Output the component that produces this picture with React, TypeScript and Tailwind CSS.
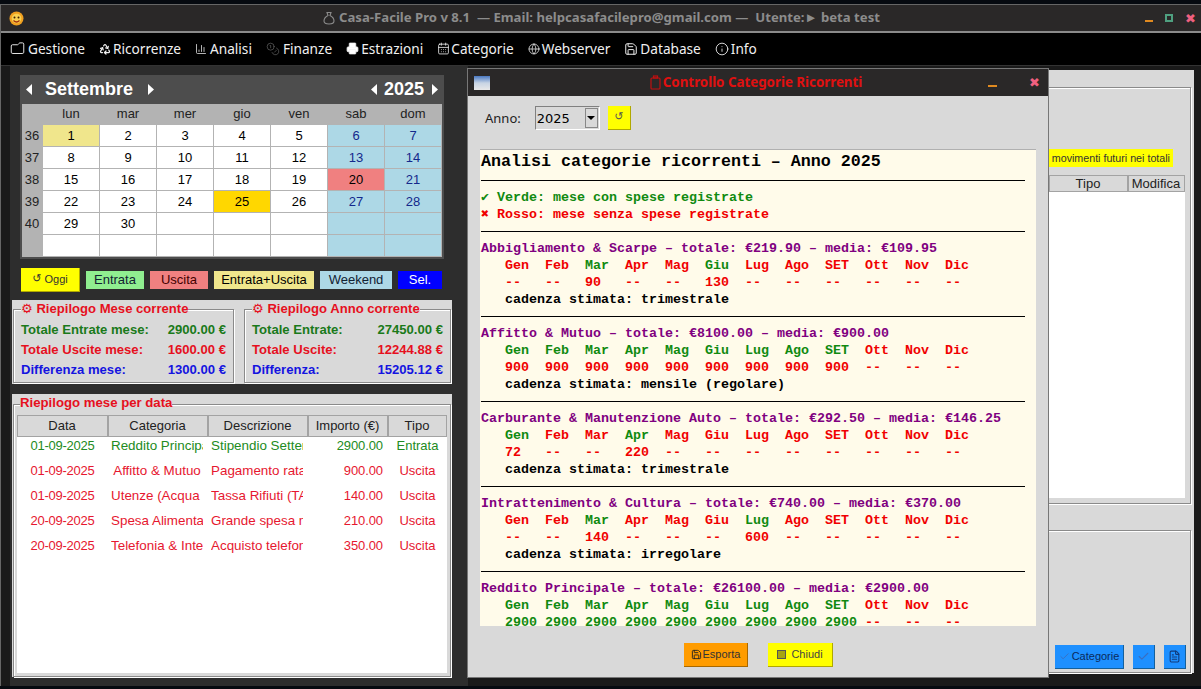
import { BarChart3, CalendarDays, Check, Coins, FileText, Folder, Globe, Info, Printer, Recycle, Save } from "lucide-react";

const menuItems = [
  { label: "Gestione", icon: <Folder size={15} strokeWidth={1.5} className="-scale-x-100" />, gap: "gap-[3px]" },
  { label: "Ricorrenze", icon: <Recycle size={12} strokeWidth={2.5} />, gap: "gap-[2px]" },
  { label: "Analisi", icon: <BarChart3 size={12} strokeWidth={1.5} />, gap: "gap-[3px]" },
  { label: "Finanze", icon: <Coins size={14} strokeWidth={1} className="text-[#777]" />, gap: "gap-[3px]" },
  { label: "Estrazioni", icon: <Printer size={13} fill="#fff" strokeWidth={1.5} />, gap: "gap-[2px]" },
  { label: "Categorie", icon: <CalendarDays size={13} strokeWidth={1.5} />, gap: "gap-[1px]" },
  { label: "Webserver", icon: <Globe size={12} strokeWidth={1.5} />, gap: "gap-[2px]" },
  { label: "Database", icon: <Save size={14} strokeWidth={1.7} />, gap: "gap-[2px]" },
  { label: "Info", icon: <Info size={14} strokeWidth={1.5} />, gap: "gap-[2px]" },
];

const weekDays = ["lun", "mar", "mer", "gio", "ven", "sab", "dom"];
const weeks = [36, 37, 38, 39, 40, 0];
const dayBg: Record<number, string> = { 1: "bg-[#f0e68c]", 20: "bg-[#f08080]", 25: "bg-[#ffd700]" };

const months = ["Gen", "Feb", "Mar", "Apr", "Mag", "Giu", "Lug", "Ago", "SET", "Ott", "Nov", "Dic"];

const movements = [
  ["01-09-2025", "Reddito Principale", "Stipendio Settembre", "2900.00", "Entrata"],
  ["01-09-2025", "Affitto & Mutuo", "Pagamento rata mutuo", "900.00", "Uscita"],
  ["01-09-2025", "Utenze (Acqua & Luce)", "Tassa Rifiuti (TARI)", "140.00", "Uscita"],
  ["20-09-2025", "Spesa Alimentare", "Grande spesa mensile", "210.00", "Uscita"],
  ["20-09-2025", "Telefonia & Internet", "Acquisto telefono", "350.00", "Uscita"],
];

const categories = [
  {
    title: "Abbigliamento & Scarpe – totale: €219.90 – media: €109.95",
    green: [2, 5],
    values: { 2: "90", 5: "130" } as Record<number, string>,
    cadence: "trimestrale",
  },
  {
    title: "Affitto & Mutuo – totale: €8100.00 – media: €900.00",
    green: [0, 1, 2, 3, 4, 5, 6, 7, 8],
    values: { 0: "900", 1: "900", 2: "900", 3: "900", 4: "900", 5: "900", 6: "900", 7: "900", 8: "900" } as Record<number, string>,
    cadence: "mensile (regolare)",
  },
  {
    title: "Carburante & Manutenzione Auto – totale: €292.50 – media: €146.25",
    green: [0, 3],
    values: { 0: "72", 3: "220" } as Record<number, string>,
    cadence: "trimestrale",
  },
  {
    title: "Intrattenimento & Cultura – totale: €740.00 – media: €370.00",
    green: [2, 6],
    values: { 2: "140", 6: "600" } as Record<number, string>,
    cadence: "irregolare",
  },
  {
    title: "Reddito Principale – totale: €26100.00 – media: €2900.00",
    green: [0, 1, 2, 3, 4, 5, 6, 7, 8],
    values: { 0: "2900", 1: "2900", 2: "2900", 3: "2900", 4: "2900", 5: "2900", 6: "2900", 7: "2900", 8: "2900" } as Record<number, string>,
    valuesGreen: true,
    cadence: "mensile (regolare)",
  },
];

const groupBox = "relative border border-[#8a8a8a] shadow-[inset_1px_1px_0_#fff,1px_1px_0_#fff]";

function Arrow({ left }: { left?: boolean }) {
  return (
    <svg width="7" height="11" viewBox="0 0 7 11" aria-hidden>
      <polygon points={left ? "6,0 6,11 0,5.5" : "1,0 1,11 7,5.5"} fill="#fff" />
    </svg>
  );
}

function Calendar() {
  return (
    <div className="ml-[8px] w-[424px] h-[184px] bg-[#4d4d4d] flex flex-col">
      <div className="h-[29px] flex items-center text-white font-bold text-[18px] shrink-0">
        <div className="ml-[6px]"><Arrow left /></div>
        <span className="ml-[12px]">Settembre</span>
        <div className="ml-[14px]"><Arrow /></div>
        <div className="ml-auto"><Arrow left /></div>
        <span className="ml-[6px]">2025</span>
        <div className="ml-[7px] mr-[6px]"><Arrow /></div>
      </div>
      <div className="mx-[2px] h-[153px] bg-[#b3b3b3] grid grid-cols-[20px_repeat(7,56px)] grid-rows-[20px_repeat(6,21px)] gap-x-px gap-y-px text-[13px] text-black">
        <div />
        {weekDays.map((d) => (
          <div key={d} className="flex items-center justify-center text-[#222]">{d}</div>
        ))}
        {weeks.map((w, r) => (
          <Row key={r} week={w} row={r} />
        ))}
      </div>
    </div>
  );
}

function Row({ week, row }: { week: number; row: number }) {
  return (
    <>
      <div className="flex items-center justify-center text-[#222]">{week || ""}</div>
      {weekDays.map((_, c) => {
        const day = row * 7 + c + 1;
        const shown = day <= 30;
        const weekend = c >= 5;
        const bg = (shown && dayBg[day]) || (weekend ? "bg-[#add8e6]" : "bg-white");
        return (
          <div
            key={c}
            className={`flex items-center justify-center ${bg} ${weekend && day !== 20 ? "text-[#14288c]" : "text-black"}`}
          >
            {shown ? day : ""}
          </div>
        );
      })}
    </>
  );
}

function Legend() {
  const items = [
    ["Entrata", "w-[58px] bg-[#90ee90] text-[#123]"],
    ["Uscita", "w-[58px] bg-[#f08080] text-[#400]"],
    ["Entrata+Uscita", "w-[100px] bg-[#f0e68c] text-black"],
    ["Weekend", "w-[72px] bg-[#add8e6] text-[#123]"],
    ["Sel.", "w-[44px] bg-[#0000ff] text-white"],
  ];
  return (
    <div className="ml-[9px] mt-[9px] flex items-center gap-[6px] h-[24px]">
      <div className="w-[59px] h-[24px] bg-[#ffff00] border-b border-r border-[#b0a800] flex items-center justify-center gap-[3px] text-[11px] text-[#333]">
        <span className="font-['DejaVu_Sans',sans-serif]">↺</span>
        <span>Oggi</span>
      </div>
      {items.map(([label, cls]) => (
        <div key={label} className={`h-[18px] flex items-center justify-center text-[13px] ${cls}`}>{label}</div>
      ))}
    </div>
  );
}

function Summary({ title, width, rows }: { title: string; width: string; rows: [string, string, string][] }) {
  return (
    <div className={`${groupBox} ${width} h-[74px] pt-[10px] px-[7px] text-[13.1px] font-bold`}>
      <div className="absolute -top-[9px] left-[7px] bg-[#d9d9d9] text-[#e6101e] leading-[16px] whitespace-pre">
        <span className="font-['DejaVu_Sans',sans-serif] font-normal">⚙</span> {title}
      </div>
      {rows.map(([label, value, color]) => (
        <div key={label} className={`h-[20px] flex items-center justify-between ${color}`}>
          <span>{label}</span>
          <span>{value}</span>
        </div>
      ))}
    </div>
  );
}

function HeadCell({ children, className }: { children: React.ReactNode; className?: string }) {
  return (
    <div className={`flex items-center justify-center border border-[#a3a3a3] bg-[#d9d9d9] pr-px ${className ?? ""}`}>
      {children}
    </div>
  );
}

function Movements() {
  const heads = ["Data", "Categoria", "Descrizione", "Importo (€)", "Tipo"];
  return (
    <div className="mt-[10px] w-[440px] h-[283px] bg-[#d9d9d9] pt-[10px] px-px text-[13px]">
      <div className={`${groupBox} h-[273px] p-[3px] pt-[10px]`}>
        <div className="absolute -top-[10px] left-[6px] bg-[#d9d9d9] font-bold text-[13.2px] text-[#e6101e] leading-[16px]">Riepilogo mese per data</div>
        <div className="bg-white h-[258px]">
          <div className="grid grid-cols-[91px_100px_100px_80px_59px] h-[18px] text-[#222]">
            {heads.map((h) => (
              <HeadCell key={h}>{h}</HeadCell>
            ))}
          </div>
          {movements.map((m, i) => (
            <div
              key={i}
              className={`grid grid-cols-[91px_100px_100px_80px_59px] h-[25px] items-center leading-[16px] ${i === 0 ? "text-[#228b22]" : "text-[#e6172f]"}`}
            >
              <div className="text-center tracking-[-0.25px]">{m[0]}</div>
              <div className="ml-[3px] mr-[5px] text-center text-[13.4px] whitespace-nowrap overflow-hidden">{m[1]}</div>
              <div className="ml-[3px] mr-[5px] text-[13.4px] whitespace-nowrap overflow-hidden">{m[2]}</div>
              <div className="pr-[5px] text-right tracking-[-0.1px]">{m[3]}</div>
              <div className="text-center">{m[4]}</div>
            </div>
          ))}
        </div>
      </div>
    </div>
  );
}

function RightPanel() {
  return (
    <div className="mt-[4px] w-[726px] h-[603px] bg-[#d9d9d9] pt-[17px] pr-[3px] flex flex-col text-[13px]">
      <div className={`${groupBox} h-[417px] pt-[61px] pr-[5px] flex flex-col items-end`}>
        <div className="mr-[12px] h-[18px] bg-[#ffff00] px-[3px] flex items-center text-[10.7px] text-[#333]">movimenti futuri nei totali</div>
        <div className="mt-[8px] w-[136px] h-[323px] flex flex-col">
          <div className="h-[17px] flex text-[#222]">
            <HeadCell className="w-[79px]">Tipo</HeadCell>
            <HeadCell className="flex-1">Modifica</HeadCell>
          </div>
          <div className="flex-1 bg-white" />
        </div>
      </div>
      <div className={`${groupBox} mt-[26px] h-[143px] pr-[4px] pb-[3px] flex items-end justify-end gap-[9px]`}>
        <BlueButton className="w-[69px] gap-[2px]">
          <Check size={11} className="text-[#3a6ec0]" />
          <span>Categorie</span>
        </BlueButton>
        <BlueButton className="w-[22px]">
          <Check size={13} className="text-[#3a6ec0]" />
        </BlueButton>
        <BlueButton className="w-[22px]">
          <FileText size={13} className="text-[#123a7a]" />
        </BlueButton>
      </div>
    </div>
  );
}

function BlueButton({ className, children }: { className: string; children: React.ReactNode }) {
  return (
    <div className={`h-[24px] bg-[#1e90ff] border-r border-b border-[#14609c] flex items-center justify-center text-[11px] text-[#0a2a5c] ${className}`}>
      {children}
    </div>
  );
}

function MonoReport() {
  const hr = (
    <div className="h-[17px] flex items-center pr-[11px]">
      <div className="h-px w-full bg-black" />
    </div>
  );
  return (
    <div className="mx-[12px] h-[477px] bg-[#fffbea] border-t border-[#b0b0b0] overflow-hidden pl-px pt-px font-['Liberation_Mono','DejaVu_Sans_Mono',monospace] font-bold text-[13.33px] leading-[17px] whitespace-pre">
      <div className="h-[21px] text-[16.67px] leading-[21px] text-black">Analisi categorie ricorrenti – Anno 2025</div>
      {hr}
      <div className="text-[#108a10]">✔ Verde: mese con spese registrate</div>
      <div className="text-[#f00000]">✖ Rosso: mese senza spese registrate</div>
      {hr}
      {categories.map((cat) => (
        <div key={cat.title}>
          <div className="text-[#800080]">{cat.title}</div>
          <div className="flex pl-[24px]">
            {months.map((m, i) => (
              <span key={m} className={`w-[40px] ${cat.green.includes(i) ? "text-[#108a10]" : "text-[#f00000]"}`}>{m}</span>
            ))}
          </div>
          <div className="flex pl-[24px]">
            {months.map((m, i) => (
              <span key={m} className={`w-[40px] ${cat.valuesGreen && cat.values[i] ? "text-[#108a10]" : "text-[#f00000]"}`}>{cat.values[i] ?? "--"}</span>
            ))}
          </div>
          <div className="pl-[24px] text-black">cadenza stimata: {cat.cadence}</div>
          {hr}
        </div>
      ))}
    </div>
  );
}

function Modal() {
  return (
    <div className="absolute left-[467px] top-[68px] w-[582px] h-[610px] bg-[#d9d9d9] border border-[#777] flex flex-col">
      <div className="h-[27px] shrink-0 bg-[#2a2828] flex items-center relative font-['Noto_Sans',sans-serif] font-bold text-[13.33px] text-[#e01010]">
        <div className="ml-[6px] w-[16px] h-[14px] bg-gradient-to-b from-[#4a78c0] via-[#c8d4e4] to-[#e8e8e8]" />
        <div className="flex-1 flex items-center justify-center gap-[2px] pl-[34px]">
          <svg width="11" height="15" viewBox="0 0 11 15" fill="none" stroke="#c01010" strokeWidth="1.2" aria-hidden>
            <rect x="1" y="3" width="9" height="11" rx="1" />
            <rect x="3.5" y="1" width="4" height="2" />
          </svg>
          <span>Controllo Categorie Ricorrenti</span>
        </div>
        <div className="w-[9px] h-[2px] mt-[6px] bg-[#e08a20] mr-[32px]" />
        <span className="mr-[8px] text-[#f06080] text-[13px] leading-none font-['DejaVu_Sans',sans-serif]">✖</span>
      </div>
      <div className="h-[53px] shrink-0 flex items-start pt-[10px] pl-[17px]">
        <span className="mt-[3px] font-['Noto_Sans',sans-serif] text-[13px] text-[#222]">Anno:</span>
        <div className="ml-[14px] w-[65px] h-[24px] bg-[#d9d9d9] border border-[#808080] border-b-white border-r-white flex items-center justify-between">
          <span className="pl-px pt-px font-['DejaVu_Sans',sans-serif] text-[13px] text-black">2025</span>
          <div className="w-[13px] h-[20px] mr-px border border-[#888] flex items-center justify-center">
            <svg width="8" height="4" viewBox="0 0 8 4" aria-hidden><polygon points="0,0 8,0 4,4" fill="#000" /></svg>
          </div>
        </div>
        <div className="ml-[8px] w-[23px] h-[24px] bg-[#ffff00] border-r border-b border-[#b0a800] flex items-center justify-center text-[11px] text-[#555] font-['DejaVu_Sans',sans-serif]">↺</div>
      </div>
      <MonoReport />
      <div className="flex-1 flex items-start gap-[20px] pt-[17px] pl-[216px] text-[11px]">
        <div className="w-[64px] h-[24px] bg-[#ff9c00] border-r border-b border-[#a86800] flex items-center justify-center gap-[1px] text-[#333]">
          <Save size={11} className="text-[#222]" />
          <span>Esporta</span>
        </div>
        <div className="w-[65px] h-[24px] bg-[#ffff00] border-r border-b border-[#b0a800] flex items-center justify-center gap-[5px] text-[#444]">
          <div className="w-[9px] h-[9px] bg-[#a8a410] border border-[#555]" />
          <span>Chiudi</span>
        </div>
      </div>
    </div>
  );
}

export default function App() {
  return (
    <div className="relative w-[1201px] h-[689px] bg-[#060a10] overflow-hidden font-['Liberation_Sans',sans-serif]">
      <div className="absolute inset-x-0 top-[4px] bottom-[3px] border-t border-l border-[#666] bg-[#1a1a1a] flex flex-col">
        <div className="h-[26px] shrink-0 bg-[#2a2828] grid grid-cols-[1fr_auto_1fr] items-center">
          <svg className="ml-[8px]" width="15" height="15" viewBox="0 0 15 15" aria-hidden>
            <circle cx="7.5" cy="7.5" r="7" fill="#f0a020" />
            <circle cx="7.5" cy="7.5" r="4.8" fill="#f8d050" />
            <circle cx="5.5" cy="6.5" r="1" fill="#402000" />
            <circle cx="9.5" cy="6.5" r="1" fill="#402000" />
            <path d="M4.5 9.5 Q7.5 12.5 10.5 9.5" stroke="#a03010" strokeWidth="1.2" fill="none" />
          </svg>
          <div className="flex items-center gap-[3px] font-['Noto_Sans',sans-serif] font-bold text-[13.15px] text-[#8c8c8c] whitespace-pre">
            <svg width="14" height="14" viewBox="0 0 14 14" fill="none" stroke="#8c8c8c" strokeWidth="1.1" aria-hidden>
              <path d="M5 1.5 h4 l-1 3 q4 2 4 5.5 q0 3 -5 3 q-5 0 -5 -3 q0 -3.5 4 -5.5 z" />
            </svg>
            <span>Casa-Facile Pro v 8.1  — Email: helpcasafacilepro@gmail.com —  Utente:► beta test</span>
          </div>
          <div className="flex items-center justify-end pr-[5px] gap-[12px]">
            <div className="w-[8px] h-[2px] mt-[6px] bg-[#e08a20]" />
            <div className="w-[8px] h-[8px] border-2 border-[#4fa080]" />
            <span className="text-[#f06080] text-[13px] leading-none font-['DejaVu_Sans',sans-serif]">✖</span>
          </div>
        </div>
        <div className="h-[2px] shrink-0 bg-[#8a8a8a]" />
        <div className="h-[32px] shrink-0 bg-black flex items-center pl-[9px] gap-[14px] font-['Noto_Sans',sans-serif] text-[13.65px] text-[#f0f0f0]">
          {menuItems.map((m) => (
            <div key={m.label} className={`flex items-center ${m.gap}`}>
              {m.icon}
              <span>{m.label}</span>
            </div>
          ))}
        </div>
        <div className="flex-1 flex min-h-0 border-t border-[#333]">
          <div className="ml-[9px] w-[458px] bg-[#2d2d2d] pt-[9px] pl-[2px]">
            <Calendar />
            <Legend />
            <div className="mt-[8px] w-[440px] h-[84px] bg-[#d9d9d9] pt-[9px] px-px flex gap-[10px]">
              <Summary
                title="Riepilogo Mese corrente"
                width="w-[221px]"
                rows={[
                  ["Totale Entrate mese:", "2900.00 €", "text-[#1a7a1a]"],
                  ["Totale Uscite mese:", "1600.00 €", "text-[#e6101e]"],
                  ["Differenza mese:", "1300.00 €", "text-[#1414e0]"],
                ]}
              />
              <Summary
                title="Riepilogo Anno corrente"
                width="w-[207px]"
                rows={[
                  ["Totale Entrate:", "27450.00 €", "text-[#1a7a1a]"],
                  ["Totale Uscite:", "12244.88 €", "text-[#e6101e]"],
                  ["Differenza:", "15205.12 €", "text-[#1414e0]"],
                ]}
              />
            </div>
            <Movements />
          </div>
          <RightPanel />
        </div>
      </div>
      <Modal />
    </div>
  );
}
